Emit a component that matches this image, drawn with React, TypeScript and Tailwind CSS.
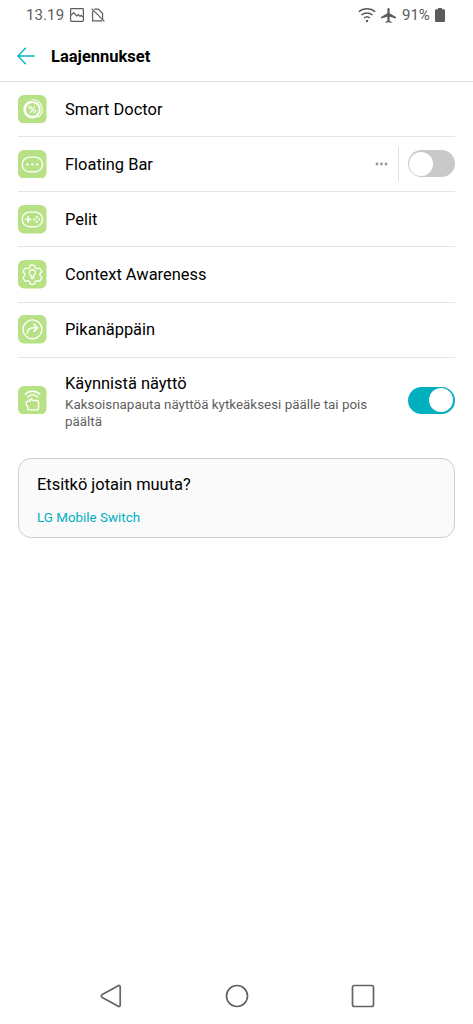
import type { ReactNode } from 'react';

function Tile({ children }: { children: ReactNode }) {
  return (
    <svg viewBox="0 0 28 28" className="h-[28.5px] w-[28.5px] shrink-0" fill="none" stroke="white" strokeWidth="1.3" strokeLinecap="round" strokeLinejoin="round">
      <rect width="28" height="28" rx="6" fill="#b6e184" stroke="none" />
      {children}
    </svg>
  );
}

const DoctorIcon = () => (
  <Tile>
    <circle cx="14.1" cy="14.2" r="7.6" strokeWidth="2.6" />
    <path d="M14.3 4.700a9.500 9.500 0 0 1 5.500 17.200" strokeWidth="1.1" />
    <path d="M14.3 5.900a8.300 8.300 0 0 1 5.200 14.700" stroke="#b6e184" strokeWidth=".8" />
    <path d="M16.200 11 12.100 17.400" strokeWidth="1.100" />
    <circle cx="12" cy="12.400" r="1.300" strokeWidth="1" />
    <circle cx="16.300" cy="15.900" r="1.300" strokeWidth="1" />
  </Tile>
);

const BarIcon = () => (
  <Tile>
    <rect x="4.1" y="7" width="20" height="14.4" rx="7.2" />
    <g fill="white" stroke="none">
      <circle cx="9.3" cy="14.1" r="1.2" />
      <circle cx="14.1" cy="14.1" r="1.2" />
      <circle cx="18.9" cy="14.1" r="1.2" />
    </g>
  </Tile>
);

const GamesIcon = () => (
  <Tile>
    <rect x="4.1" y="7" width="20" height="14.4" rx="7.2" />
    <path d="M7.500 14.200h5M10 11.700v5" strokeWidth="1.6" />
    <g fill="white" stroke="none">
      <circle cx="18.5" cy="11.900" r="1.1" />
      <circle cx="18.5" cy="16.500" r="1.1" />
      <circle cx="16.2" cy="14.2" r="1.1" />
      <circle cx="20.8" cy="14.2" r="1.1" />
    </g>
  </Tile>
);

const ContextIcon = () => (
  <Tile>
    <path d="M12 5h4.200l.6 2.500 2 1.100 2.500-.7 2.100 3.600-1.800 1.800v2.100l1.800 1.900-2.100 3.600-2.500-.7-2 1.100-.6 2.500H12l-.6-2.500-2-1.100-2.500.7-2.100-3.600 1.800-1.900v-2.100l-1.800-1.800 2.100-3.600 2.500.7 2-1.100z" strokeWidth="1.25" />
    <path d="M12.700 16.200v-1.100a3 3 0 1 1 2.800 0v1.100z" strokeWidth="1.2" />
    <path d="M12.900 18h2.400" strokeWidth="1.4" />
  </Tile>
);

const ShortcutIcon = () => (
  <Tile>
    <circle cx="14.2" cy="14.1" r="9.3" />
    <path d="M9.100 17.800c.2-3.700 2.400-5.200 6.200-5.200h3.300M15.700 9.200l3.400 3.400-3.400 3.500" strokeWidth="1.500" />
  </Tile>
);

const KnockIcon = () => (
  <Tile>
    <path d="M7 8.100c4.100-4 10.500-4 14.600 0M9.500 10.700c2.700-2.600 7-2.600 9.700 0" strokeWidth="1.4" />
    <path d="M11.900 14.200v-.6c0-1.200 2.100-1.200 2.100 0v.6h4.600a1.600 1.600 0 0 1 1.600 1.600v6a1.600 1.600 0 0 1-1.600 1.600h-7.400a1.600 1.600 0 0 1-1.600-1.600v-1.300l-1.400-2v-2.100c0-.9.600-1.500 1.500-1.500h2.200z" strokeWidth="1.35" />
  </Tile>
);

function Toggle({ on = false }: { on?: boolean }) {
  return (
    <div role="switch" aria-checked={on} className={`flex h-[27px] w-[47px] shrink-0 items-center rounded-full p-[1.5px] ${on ? 'justify-end bg-[#00b0bf]' : 'justify-start bg-[#c9c9c9]'}`}>
      <span className="h-6 w-6 rounded-full bg-white" />
    </div>
  );
}

function Row({ icon, title, children }: { icon: ReactNode; title: string; children?: ReactNode }) {
  return (
    <div className="flex h-[55.15px] items-center border-b border-[#e5e5e5]">
      {icon}
      <span className="ml-[18.5px] flex-1 pt-[1.3px] text-[16.45px] leading-5">{title}</span>
      {children}
    </div>
  );
}

export default function App() {
  return (
    <div className="flex h-[1024px] w-[473px] flex-col overflow-hidden bg-white font-[Roboto,sans-serif] text-black">
      <div className="flex h-[30px] shrink-0 items-center pr-7 pl-[26px] text-[15px] text-[#5c5c5c]">
        <span className="w-[44px] pt-px text-[15px] tracking-[0.1px]">13.19</span>
        <svg className="h-[14px] w-[14px]" viewBox="0 0 14 14" fill="none" stroke="currentColor" strokeWidth="1.2">
          <rect x=".6" y=".6" width="12.8" height="12.800" rx=".8" />
          <path d="m1 7.300 2.600-2.600L6.700 8l1.600-1.500 1.800 1.900 1-1L13 9" />
        </svg>
        <svg className="ml-[7px] h-[14px] w-[14px]" viewBox="0 0 14 14" fill="none" stroke="currentColor" strokeWidth="1.2">
          <path d="M3.200 1.200h4.200l4.200 4.300v5.300M1.600 3v9.800h9.800M.6.6l12.800 12.800" />
        </svg>
        <span className="flex-1" />
        <svg className="h-[16px] w-[18px]" viewBox="0 0 18 16" fill="none" stroke="currentColor" strokeWidth="1.500">
          <path d="M.8 4.800c4.700-4.100 11.700-4.100 16.400 0M3.400 8c3.200-2.800 8-2.800 11.200 0M6 11c1.700-1.500 4.300-1.500 6 0" />
          <circle cx="9" cy="14" r="1.2" fill="currentColor" stroke="none" />
        </svg>
        <svg className="ml-[5px] h-[15px] w-[15px]" viewBox="2 2 20 20" fill="currentColor">
          <path d="M22 16v-2l-8.500-5V3.500a1.500 1.500 0 0 0-3 0V9L2 14v2l8.500-2.500V19L8 20.500V22l4-1 4 1v-1.500L13.500 19v-5.500z" />
        </svg>
        <span className="ml-[6px] w-[29px] pt-px whitespace-nowrap">91%</span>
        <svg className="ml-[4px] h-[14px] w-[10px]" viewBox="0 0 10 14" fill="currentColor">
          <path d="M3 0h4v1.300h2a1 1 0 0 1 1 1V13a1 1 0 0 1-1 1H1a1 1 0 0 1-1-1V2.300a1 1 0 0 1 1-1h2z" />
        </svg>
      </div>

      <header className="flex h-[52px] shrink-0 items-center border-b border-[#dedede] pl-[17px]">
        <svg className="h-[18px] w-[18px]" viewBox="0 0 18 18" fill="none" stroke="#00b0bf" strokeWidth="1.3">
          <path d="M17.500 9H1M9 .8.900 9 9 17.200" />
        </svg>
        <h1 className="ml-4 pt-[2px] text-[16.500px] leading-5 font-bold">Laajennukset</h1>
      </header>

      <main className="flex-1 pr-[18.500px] pl-[18px]">
        <Row icon={<DoctorIcon />} title="Smart Doctor" />
        <Row icon={<BarIcon />} title="Floating Bar">
          <svg className="h-1 w-[13px]" viewBox="0 0 13 4" fill="#999999">
            <circle cx="2" cy="2" r="1.400" /><circle cx="6.500" cy="2" r="1.400" /><circle cx="11" cy="2" r="1.400" />
          </svg>
          <span className="mr-[9px] ml-[10px] h-[34px] w-px bg-[#e0e0e0]" />
          <div className="pb-px"><Toggle /></div>
        </Row>
        <Row icon={<GamesIcon />} title="Pelit" />
        <Row icon={<ContextIcon />} title="Context Awareness" />
        <Row icon={<ShortcutIcon />} title="Pikanäppäin" />
        <div className="flex h-[85px] items-center">
          <KnockIcon />
          <div className="ml-[18.500px] flex-1 pt-[3px]">
            <div className="text-[16.450px] leading-[22px]">Käynnistä näyttö</div>
            <div className="w-[320px] pt-px text-[13.400px] leading-[17.500px] text-[#5e5e5e]">Kaksoisnapauta näyttöä kytkeäksesi päälle tai pois päältä</div>
          </div>
          <Toggle on />
        </div>
        <section className="mt-[15px] h-20 rounded-[13px] border border-[#cecece] bg-[#fafafa] px-[18px] pt-4">
          <h2 className="text-[16.450px] leading-5">Etsitkö jotain muuta?</h2>
          <a className="mt-[14px] block text-[13.400px] leading-[18px] text-[#00b0bf]">LG Mobile Switch</a>
        </section>
      </main>

      <nav className="flex h-[56px] shrink-0 items-center justify-between pr-[98px] pl-[99px]">
        <svg className="h-6 w-6" viewBox="0 0 24 24" fill="none" stroke="#646464" strokeWidth="1.700">
          <path d="M19.200 1.700 3.300 10.500a1.700 1.700 0 0 0 0 3l15.900 8.800a1.300 1.300 0 0 0 2-1.200V2.900a1.300 1.300 0 0 0-2-1.200z" />
        </svg>
        <svg className="h-6 w-6" viewBox="0 0 24 24" fill="none" stroke="#646464" strokeWidth="1.700"><circle cx="12" cy="12" r="10.500" /></svg>
        <svg className="h-6 w-6" viewBox="0 0 24 24" fill="none" stroke="#646464" strokeWidth="1.700"><rect x="1.500" y="1.500" width="21" height="21" rx="2" /></svg>
      </nav>
    </div>
  );
}
